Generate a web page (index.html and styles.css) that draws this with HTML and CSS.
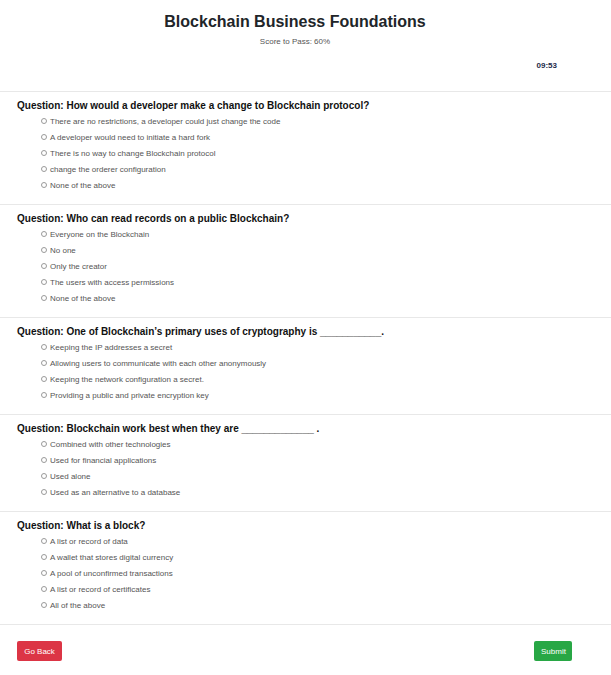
FILE: index.html
```html
<!DOCTYPE html>
<html>
<head>
<meta charset="utf-8">
<link rel="stylesheet" href="styles.css">
</head>
<body>
<div class="header">
  <div class="header-inner">
    <h1 class="title">Blockchain Business Foundations</h1>
    <p class="score">Score to Pass: 60%</p>
    <div class="timer-row"><span class="timer">09:53</span></div>
  </div>
</div>
<div class="question">
  <h2 class="q-text">Question: How would a developer make a change to Blockchain protocol?</h2>
  <div class="opt"><span class="radio"></span>There are no restrictions, a developer could just change the code</div>
  <div class="opt"><span class="radio"></span>A developer would need to initiate a hard fork</div>
  <div class="opt"><span class="radio"></span>There is no way to change Blockchain protocol</div>
  <div class="opt"><span class="radio"></span>change the orderer configuration</div>
  <div class="opt"><span class="radio"></span>None of the above</div>
</div>
<div class="question">
  <h2 class="q-text">Question: Who can read records on a public Blockchain?</h2>
  <div class="opt"><span class="radio"></span>Everyone on the Blockchain</div>
  <div class="opt"><span class="radio"></span>No one</div>
  <div class="opt"><span class="radio"></span>Only the creator</div>
  <div class="opt"><span class="radio"></span>The users with access permissions</div>
  <div class="opt"><span class="radio"></span>None of the above</div>
</div>
<div class="question">
  <h2 class="q-text">Question: One of Blockchain’s primary uses of cryptography is ___________.</h2>
  <div class="opt"><span class="radio"></span>Keeping the IP addresses a secret</div>
  <div class="opt"><span class="radio"></span>Allowing users to communicate with each other anonymously</div>
  <div class="opt"><span class="radio"></span>Keeping the network configuration a secret.</div>
  <div class="opt"><span class="radio"></span>Providing a public and private encryption key</div>
</div>
<div class="question">
  <h2 class="q-text">Question: Blockchain work best when they are _____________ .</h2>
  <div class="opt"><span class="radio"></span>Combined with other technologies</div>
  <div class="opt"><span class="radio"></span>Used for financial applications</div>
  <div class="opt"><span class="radio"></span>Used alone</div>
  <div class="opt"><span class="radio"></span>Used as an alternative to a database</div>
</div>
<div class="question">
  <h2 class="q-text">Question: What is a block?</h2>
  <div class="opt"><span class="radio"></span>A list or record of data</div>
  <div class="opt"><span class="radio"></span>A wallet that stores digital currency</div>
  <div class="opt"><span class="radio"></span>A pool of unconfirmed transactions</div>
  <div class="opt"><span class="radio"></span>A list or record of certificates</div>
  <div class="opt"><span class="radio"></span>All of the above</div>
</div>
<div class="footer">
  <button class="btn btn-back">Go Back</button>
  <button class="btn btn-submit">Submit</button>
</div>
</body>
</html>
```
FILE: styles.css
```css
* { box-sizing: border-box; }
body {
  margin: 0;
  font-family: "Liberation Sans", Arial, sans-serif;
  color: #212529;
  background: #fff;
}
.header {
  height: 92px;
  border-bottom: 1px solid #e8e8e8;
}
.header-inner {
  width: 590px;
  padding-top: 12px;
  text-align: center;
}
.title {
  margin: 0;
  font-size: 16px;
  line-height: 19px;
  font-weight: bold;
  color: #212529;
}
.score {
  margin: 6px 0 0;
  font-size: 8px;
  line-height: 10px;
  color: #555;
}
.timer-row {
  display: flex;
  justify-content: flex-end;
  padding-right: 33px;
  margin-top: 14px;
}
.timer {
  font-size: 8px;
  line-height: 10px;
  font-weight: bold;
  color: #1d2b4a;
}
.question {
  padding: 7px 17px 11px;
  border-bottom: 1px solid #e8e8e8;
}
.q-text {
  margin: 0;
  font-size: 10px;
  line-height: 14px;
  font-weight: bold;
  color: #111;
}
.opt {
  display: flex;
  align-items: center;
  padding-left: 24px;
  height: 16px;
  font-size: 8px;
  color: #555;
}
.radio {
  width: 6px;
  height: 6px;
  border: 1px solid #9a9a9a;
  border-radius: 50%;
  margin-right: 3px;
  flex: none;
}
.footer {
  width: 590px;
  display: flex;
  justify-content: space-between;
  padding: 16px 18px 0 17px;
}
.btn {
  border: none;
  border-radius: 2px;
  color: #fff;
  font-family: "Liberation Sans", Arial, sans-serif;
  font-size: 8px;
  height: 20px;
  padding: 0 7px;
  cursor: pointer;
}
.btn-back { background: #dc3545; width: 45px; }
.btn-submit { background: #28a745; width: 38px; }
```
